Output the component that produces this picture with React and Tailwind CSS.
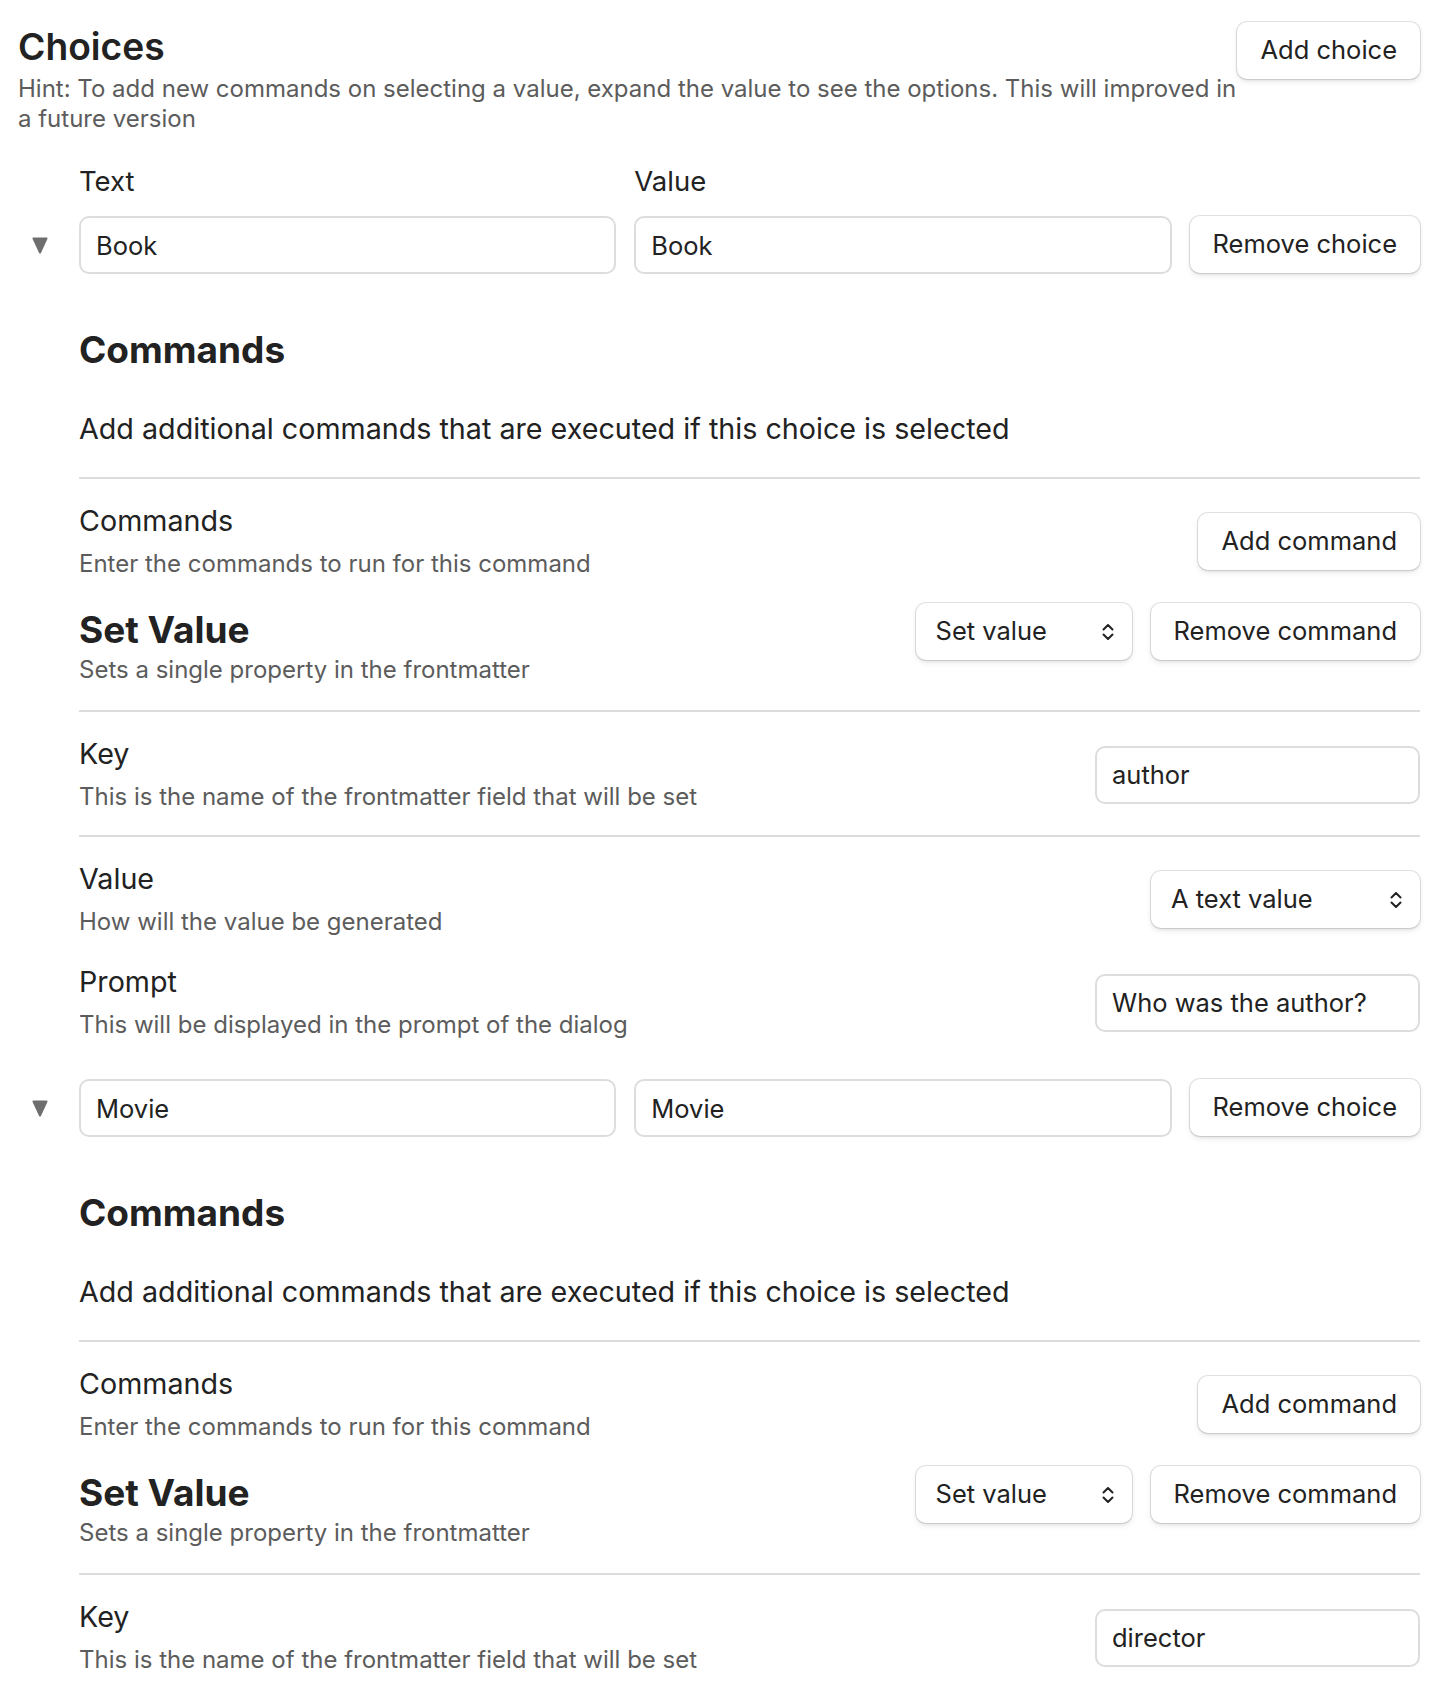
import React from "react";

function Btn({ children, className = "" }) {
  return (
    <button
      className={
        "h-[57px] shrink-0 whitespace-nowrap rounded-[10px] bg-white px-[23px] text-[25.5px] text-[#222] shadow-[0_0_0_1px_rgba(0,0,0,0.11),0_3px_6px_rgba(0,0,0,0.08),0_2px_3px_rgba(0,0,0,0.05)] " +
        className
      }
    >
      {children}
    </button>
  );
}

function Chevron() {
  return (
    <svg width="14" height="20" viewBox="0 0 14 20" fill="none" stroke="#222" strokeWidth="2" strokeLinecap="round" strokeLinejoin="round">
      <path d="M2.5 7.5L7 3l4.5 4.5" />
      <path d="M2.5 12.5L7 17l4.5-4.5" />
    </svg>
  );
}

function Select({ value, className = "" }) {
  return (
    <div
      className={
        "flex h-[57px] shrink-0 items-center justify-between rounded-[10px] bg-white pl-[20px] pr-[17px] text-[25.5px] text-[#222] shadow-[0_0_0_1px_rgba(0,0,0,0.11),0_3px_6px_rgba(0,0,0,0.08),0_2px_3px_rgba(0,0,0,0.05)] " +
        className
      }
    >
      <span>{value}</span>
      <Chevron />
    </div>
  );
}

function Input({ value, className = "" }) {
  return (
    <input
      readOnly
      value={value}
      className={
        "h-[58px] rounded-[10px] border-2 border-[#dddddd] bg-white px-[15px] text-[25.5px] text-[#222] outline-none " +
        className
      }
    />
  );
}

function Triangle() {
  return (
    <svg width="16" height="17" viewBox="0 0 16 17">
      <path d="M1.5 1.5 L14.5 1.5 L8 15.5 Z" fill="#6e6e6e" stroke="#6e6e6e" strokeWidth="2" strokeLinejoin="round" />
    </svg>
  );
}

function NameDesc({ name, desc }) {
  return (
    <div>
      <div className="text-[28.7px] leading-[34px] text-[#222]">{name}</div>
      <div className="mt-[10px] text-[24px] leading-[31px] text-[#5c5c5c]">{desc}</div>
    </div>
  );
}

function ChoiceRow({ text, value, labels }) {
  return (
    <div className="grid grid-cols-[43px_1fr_1fr_auto] gap-x-[18px]">
      {labels && (
        <>
          <div />
          <div className="mb-[18px] text-[27.5px] leading-[34px]">Text</div>
          <div className="mb-[18px] text-[27.5px] leading-[34px]">Value</div>
          <div />
        </>
      )}
      <div className="flex items-center justify-center">
        <Triangle />
      </div>
      <Input value={text} className="w-full min-w-0" />
      <Input value={value} className="w-full min-w-0" />
      <Btn>Remove choice</Btn>
    </div>
  );
}

function Details({ keyName, prompt }) {
  return (
    <div className="ml-[61px]">
      <h3 className="mt-[53px] text-[37px] font-bold leading-[45px] text-[#222]">Commands</h3>
      <p className="mt-[39px] text-[28.7px] leading-[35px] text-[#222]">
        Add additional commands that are executed if this choice is selected
      </p>
      <div className="mt-[31px] h-[2px] bg-[#dcdcdc]" />
      <div className="mt-[25px] flex items-center justify-between">
        <NameDesc name="Commands" desc="Enter the commands to run for this command" />
        <Btn>Add command</Btn>
      </div>
      <div className="mt-[24px] flex items-start justify-between">
        <div className="pt-[4px]">
          <div className="text-[37px] font-bold leading-[45px] text-[#222]">Set Value</div>
          <div className="mt-[2px] text-[24px] leading-[31px] text-[#5c5c5c]">
            Sets a single property in the frontmatter
          </div>
        </div>
        <div className="flex gap-[19px]">
          <Select value="Set value" className="w-[216px]" />
          <Btn>Remove command</Btn>
        </div>
      </div>
      <div className="mt-[25px] h-[2px] bg-[#dcdcdc]" />
      <div className="mt-[25px] flex items-center justify-between">
        <NameDesc name="Key" desc="This is the name of the frontmatter field that will be set" />
        <Input value={keyName} className="w-[325px]" />
      </div>
      {prompt && (
        <>
          <div className="mt-[23px] h-[2px] bg-[#dcdcdc]" />
          <div className="mt-[25px] flex items-center justify-between">
            <NameDesc name="Value" desc="How will the value be generated" />
            <Select value="A text value" className="w-[269px]" />
          </div>
          <div className="mt-[28px] flex items-center justify-between">
            <NameDesc name="Prompt" desc="This will be displayed in the prompt of the dialog" />
            <Input value={prompt} className="w-[325px]" />
          </div>
        </>
      )}
    </div>
  );
}

export default function App() {
  return (
    <div className="h-[1692px] overflow-hidden bg-white px-[18px] font-['Inter',_'Noto_Sans',_sans-serif] text-[#222]">
      <div className="flex items-start justify-between gap-[8px]">
        <div className="min-w-0 flex-1">
          <h2 className="mt-[24px] text-[37.2px] font-semibold leading-[46px]">Choices</h2>
          <p className="mt-[4px] text-[24px] leading-[30px] text-[#5c5c5c]">
            <span className="whitespace-nowrap">
              Hint: To add new commands on selecting a value, expand the value to see the options. This will improved in
            </span>
            <br />
            a future version
          </p>
        </div>
        <Btn className="mt-[22px]">Add choice</Btn>
      </div>
      <div className="mt-[30px]">
        <ChoiceRow text="Book" value="Book" labels />
        <Details keyName="author" prompt="Who was the author?" />
        <div className="mt-[39px]">
          <ChoiceRow text="Movie" value="Movie" />
        </div>
        <Details keyName="director" />
      </div>
    </div>
  );
}
